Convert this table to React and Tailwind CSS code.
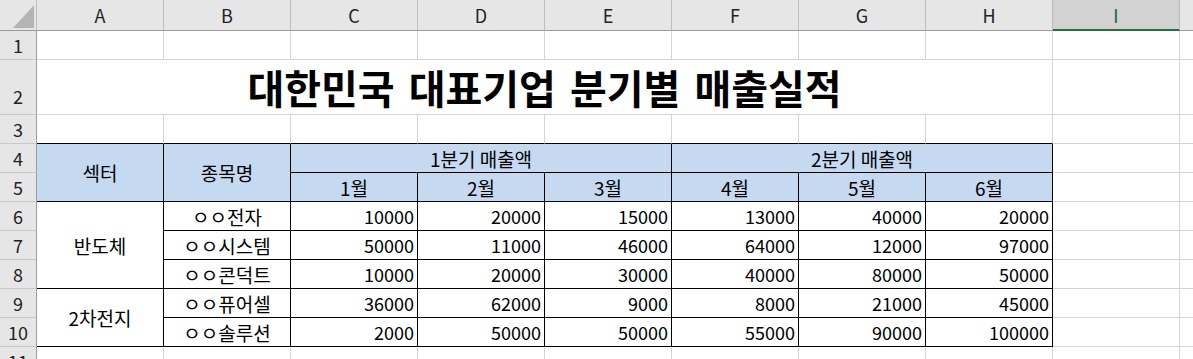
import React from 'react'

const FONT = "font-['Noto_Sans_CJK_KR','Noto_Sans',sans-serif]"
const cols = ['A', 'B', 'C', 'D', 'E', 'F', 'G', 'H', 'I']

const rows = [
  { sector: '반도체', span: 3, name: 'ㅇㅇ전자', v: [10000, 20000, 15000, 13000, 40000, 20000] },
  { name: 'ㅇㅇ시스템', v: [50000, 11000, 46000, 64000, 12000, 97000] },
  { name: 'ㅇㅇ콘덕트', v: [10000, 20000, 30000, 40000, 80000, 50000] },
  { sector: '2차전지', span: 2, name: 'ㅇㅇ퓨어셀', v: [36000, 62000, 9000, 8000, 21000, 45000] },
  { name: 'ㅇㅇ솔루션', v: [2000, 50000, 50000, 55000, 90000, 100000] },
]

function RowHead({ n, tall }) {
  return (
    <div
      className={`bg-[#e6e6e6] border-r border-b border-r-[#9c9c9c] border-b-[#c8c8c8] flex justify-center text-[18px] leading-none text-[#222] ${
        tall ? 'items-start pt-[27px]' : 'items-center'
      }`}
    >
      {n}
    </div>
  )
}

const grid = 'border-r border-b border-[#d4d4d4]'
const box = 'border-r border-b border-black'
const head = `${box} bg-[#c5d9f1] flex items-center justify-center text-[19px] leading-none`

export default function App() {
  return (
    <div
      className={`${FONT} w-[1193px] h-[359px] overflow-hidden bg-white text-black grid grid-cols-[37px_repeat(9,127px)_1fr] grid-rows-[31px_29px_55px_29px_29px_29px_29px_29px_29px_29px_29px_29px]`}
    >
      {/* column headers */}
      <div className="bg-[#e6e6e6] border-r border-b border-r-[#bdbdbd] border-b-[#9c9c9c] relative">
        <svg className="absolute left-[13px] top-[5px]" width="21" height="23" viewBox="0 0 21 23">
          <polygon points="21,0 21,23 0,23" fill="#b4b4b4" />
        </svg>
      </div>
      {cols.map((c) =>
        c === 'I' ? (
          <div
            key={c}
            className="bg-[#d2d2d2] border-r border-r-[#bdbdbd] border-b-2 border-b-[#217346] flex items-center justify-center text-[18px] leading-none text-[#1d5c3a]"
          >
            {c}
          </div>
        ) : (
          <div
            key={c}
            className="bg-[#e6e6e6] border-r border-b border-r-[#bdbdbd] border-b-[#9c9c9c] flex items-center justify-center text-[18px] leading-none text-[#222]"
          >
            {c}
          </div>
        )
      )}
      <div className="bg-[#e6e6e6] border-b border-b-[#9c9c9c]" />

      {/* row 1 */}
      <RowHead n={1} />
      {cols.map((c) => (
        <div key={c} className={grid} />
      ))}
      <div className="border-b border-[#d4d4d4]" />

      {/* row 2 title */}
      <RowHead n={2} tall />
      <div className={`${grid} col-span-8 flex items-center justify-center`}>
        <span className="text-[40px] font-bold leading-none [word-spacing:5px]">대한민국 대표기업 분기별 매출실적</span>
      </div>
      <div className={grid} />
      <div className="border-b border-[#d4d4d4]" />

      {/* row 3 */}
      <RowHead n={3} />
      {cols.map((c) => (
        <div key={c} className={c === 'I' ? grid : 'border-r border-b border-r-[#d4d4d4] border-b-black'} />
      ))}
      <div className="border-b border-[#d4d4d4]" />

      {/* row 4 */}
      <RowHead n={4} />
      <div className={`${head} row-span-2`}>섹터</div>
      <div className={`${head} row-span-2`}>종목명</div>
      <div className={`${head} col-span-3`}>1분기 매출액</div>
      <div className={`${head} col-span-3`}>2분기 매출액</div>
      <div className={grid} />
      <div className="border-b border-[#d4d4d4]" />

      {/* row 5 */}
      <RowHead n={5} />
      {['1월', '2월', '3월', '4월', '5월', '6월'].map((m) => (
        <div key={m} className={head}>
          {m}
        </div>
      ))}
      <div className={grid} />
      <div className="border-b border-[#d4d4d4]" />

      {/* data rows */}
      {rows.map((r, i) => (
        <React.Fragment key={r.name}>
          <RowHead n={6 + i} />
          {r.sector && (
            <div
              className={`${box} ${r.span === 3 ? 'row-span-3' : 'row-span-2'} flex items-center justify-center text-[19px] leading-none`}
            >
              {r.sector}
            </div>
          )}
          <div className={`${box} flex items-center justify-center text-[19px] leading-none`}>{r.name}</div>
          {r.v.map((v, j) => (
            <div key={j} className={`${box} flex items-center justify-end pr-[3px] text-[18px] leading-none`}>
              {v}
            </div>
          ))}
          <div className={grid} />
          <div className="border-b border-[#d4d4d4]" />
        </React.Fragment>
      ))}

      {/* row 11 */}
      <RowHead n={11} />
      {cols.map((c) => (
        <div key={c} className={grid} />
      ))}
      <div className="border-b border-[#d4d4d4]" />
    </div>
  )
}
